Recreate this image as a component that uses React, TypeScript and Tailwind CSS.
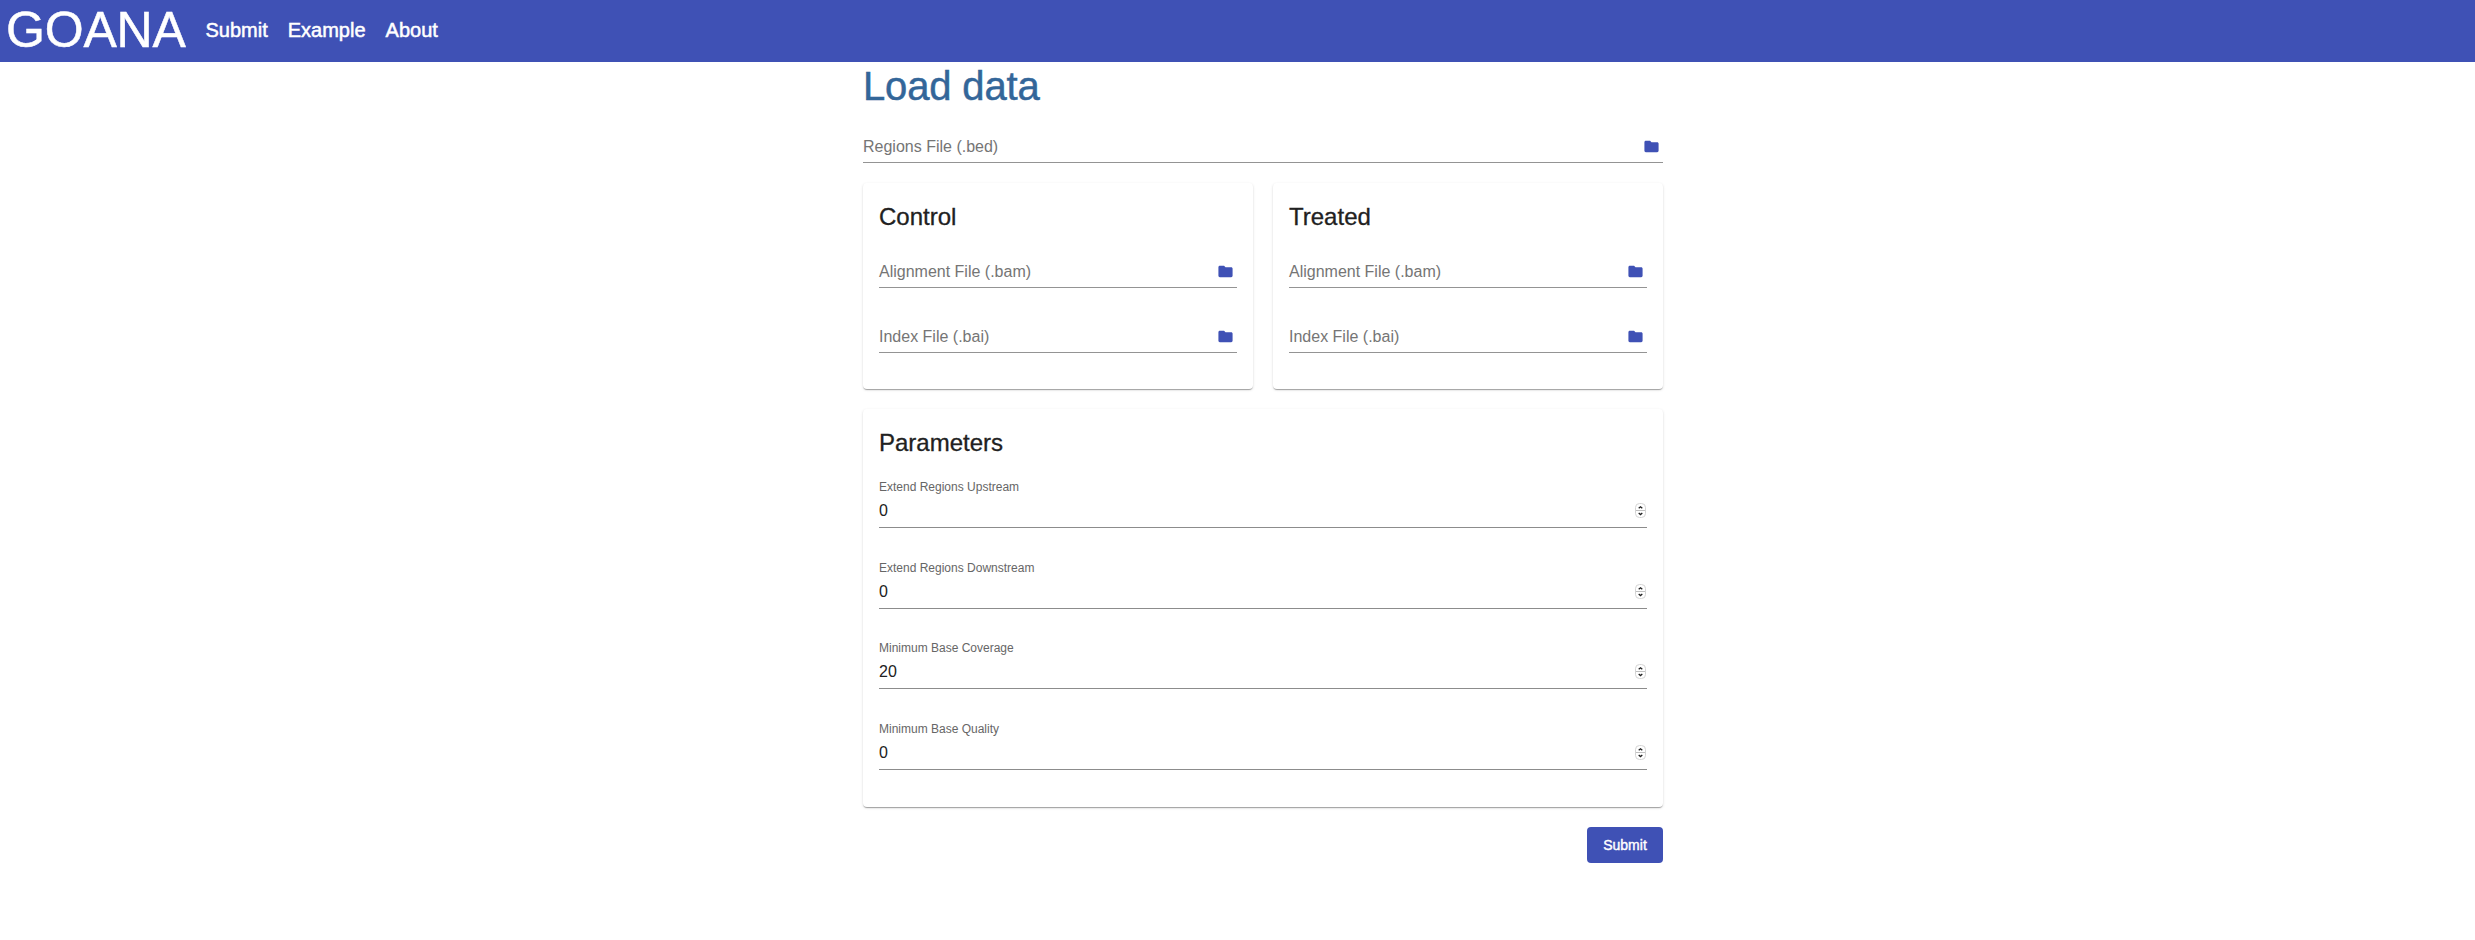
import React from "react";

const cardClass =
  "rounded bg-white px-4 shadow-[0_2px_1px_-1px_rgba(0,0,0,0.2),0_1px_1px_0_rgba(0,0,0,0.14),0_1px_3px_0_rgba(0,0,0,0.12)]";

const cardTitleClass =
  "mb-[22px] text-2xl leading-8 text-[#212121] [-webkit-text-stroke:0.3px_#212121]";

function FolderIcon() {
  return (
    <svg className="mr-[3.500px] size-[17px] fill-[#3f51b5]" viewBox="0 0 24 24">
      <path d="M10 4H4c-1.100 0-2 .9-2 2v12c0 1.100.9 2 2 2h16c1.100 0 2-.9 2-2V8c0-1.100-.9-2-2-2h-8l-2-2z" />
    </svg>
  );
}

function FileField({ label }: { label: string }) {
  return (
    <div className="flex h-[33px] items-start justify-between border-b border-[#949494] pt-2 leading-[18px] text-[#757575]">
      <span>{label}</span>
      <FolderIcon />
    </div>
  );
}

function Spinner() {
  return (
    <svg className="mt-[2px] h-[17px] w-[12px]" viewBox="0 0 12 17" fill="none">
      <rect x="0.500" y="1.500" width="10" height="14" rx="4" fill="#fff" stroke="#d4d4d4" />
      <path d="M1 8.500h9" stroke="#c0c0c0" />
      <path d="M3.700 6.300L5.500 4.800 7.300 6.300M3.700 11L5.500 12.500 7.300 11" stroke="#222" strokeWidth="1.400" />
    </svg>
  );
}

function NumberField({ label, value }: { label: string; value: string }) {
  return (
    <div className="h-[80.700px]">
      <div className="h-12 border-b border-[#8c8c8c]">
        <div className="text-xs leading-[14px] text-[#666]">{label}</div>
        <div className="mt-[6px] flex justify-between leading-[22px] text-[#212121]">
          <span>{value}</span>
          <Spinner />
        </div>
      </div>
    </div>
  );
}

function SampleCard({ title }: { title: string }) {
  return (
    <section className={`${cardClass} h-[206px] flex-1 pt-[18px]`}>
      <h2 className={cardTitleClass}>{title}</h2>
      <div className="flex flex-col gap-8">
        <FileField label="Alignment File (.bam)" />
        <FileField label="Index File (.bai)" />
      </div>
    </section>
  );
}

export default function App() {
  return (
    <div className="min-h-[940px] bg-white font-['Liberation_Sans',Arial,sans-serif] text-base">
      <header className="flex h-[62px] items-center bg-[#3f51b5] pb-[2px] pl-[6px] text-white">
        <span className="w-[199.500px] text-[50px] leading-[58px] tracking-[-0.200px] [-webkit-text-stroke:0.500px_white]">GOANA</span>
        <nav className="flex gap-5 text-xl [-webkit-text-stroke:0.500px_white]">
          <a>Submit</a>
          <a>Example</a>
          <a>About</a>
        </nav>
      </header>
      <main className="ml-[863px] w-[800px]">
        <h1 className="h-[68px] text-[40px] leading-[48px] tracking-[-0.150px] text-[#336699] [-webkit-text-stroke:0.500px_#336699]">Load data</h1>
        <FileField label="Regions File (.bed)" />
        <div className="mt-5 flex gap-5">
          <SampleCard title="Control" />
          <SampleCard title="Treated" />
        </div>
        <section className={`${cardClass} mt-5 h-[398px] pt-[18px]`}>
          <h2 className="mb-[21px] text-2xl leading-8 text-[#212121] [-webkit-text-stroke:0.300px_#212121]">Parameters</h2>
          <NumberField label="Extend Regions Upstream" value="0" />
          <NumberField label="Extend Regions Downstream" value="0" />
          <NumberField label="Minimum Base Coverage" value="20" />
          <NumberField label="Minimum Base Quality" value="0" />
        </section>
        <div className="mt-5 flex justify-end">
          <button className="h-9 w-[76px] rounded bg-[#3f51b5] text-sm text-white [-webkit-text-stroke:0.400px_white]">Submit</button>
        </div>
      </main>
    </div>
  );
}
